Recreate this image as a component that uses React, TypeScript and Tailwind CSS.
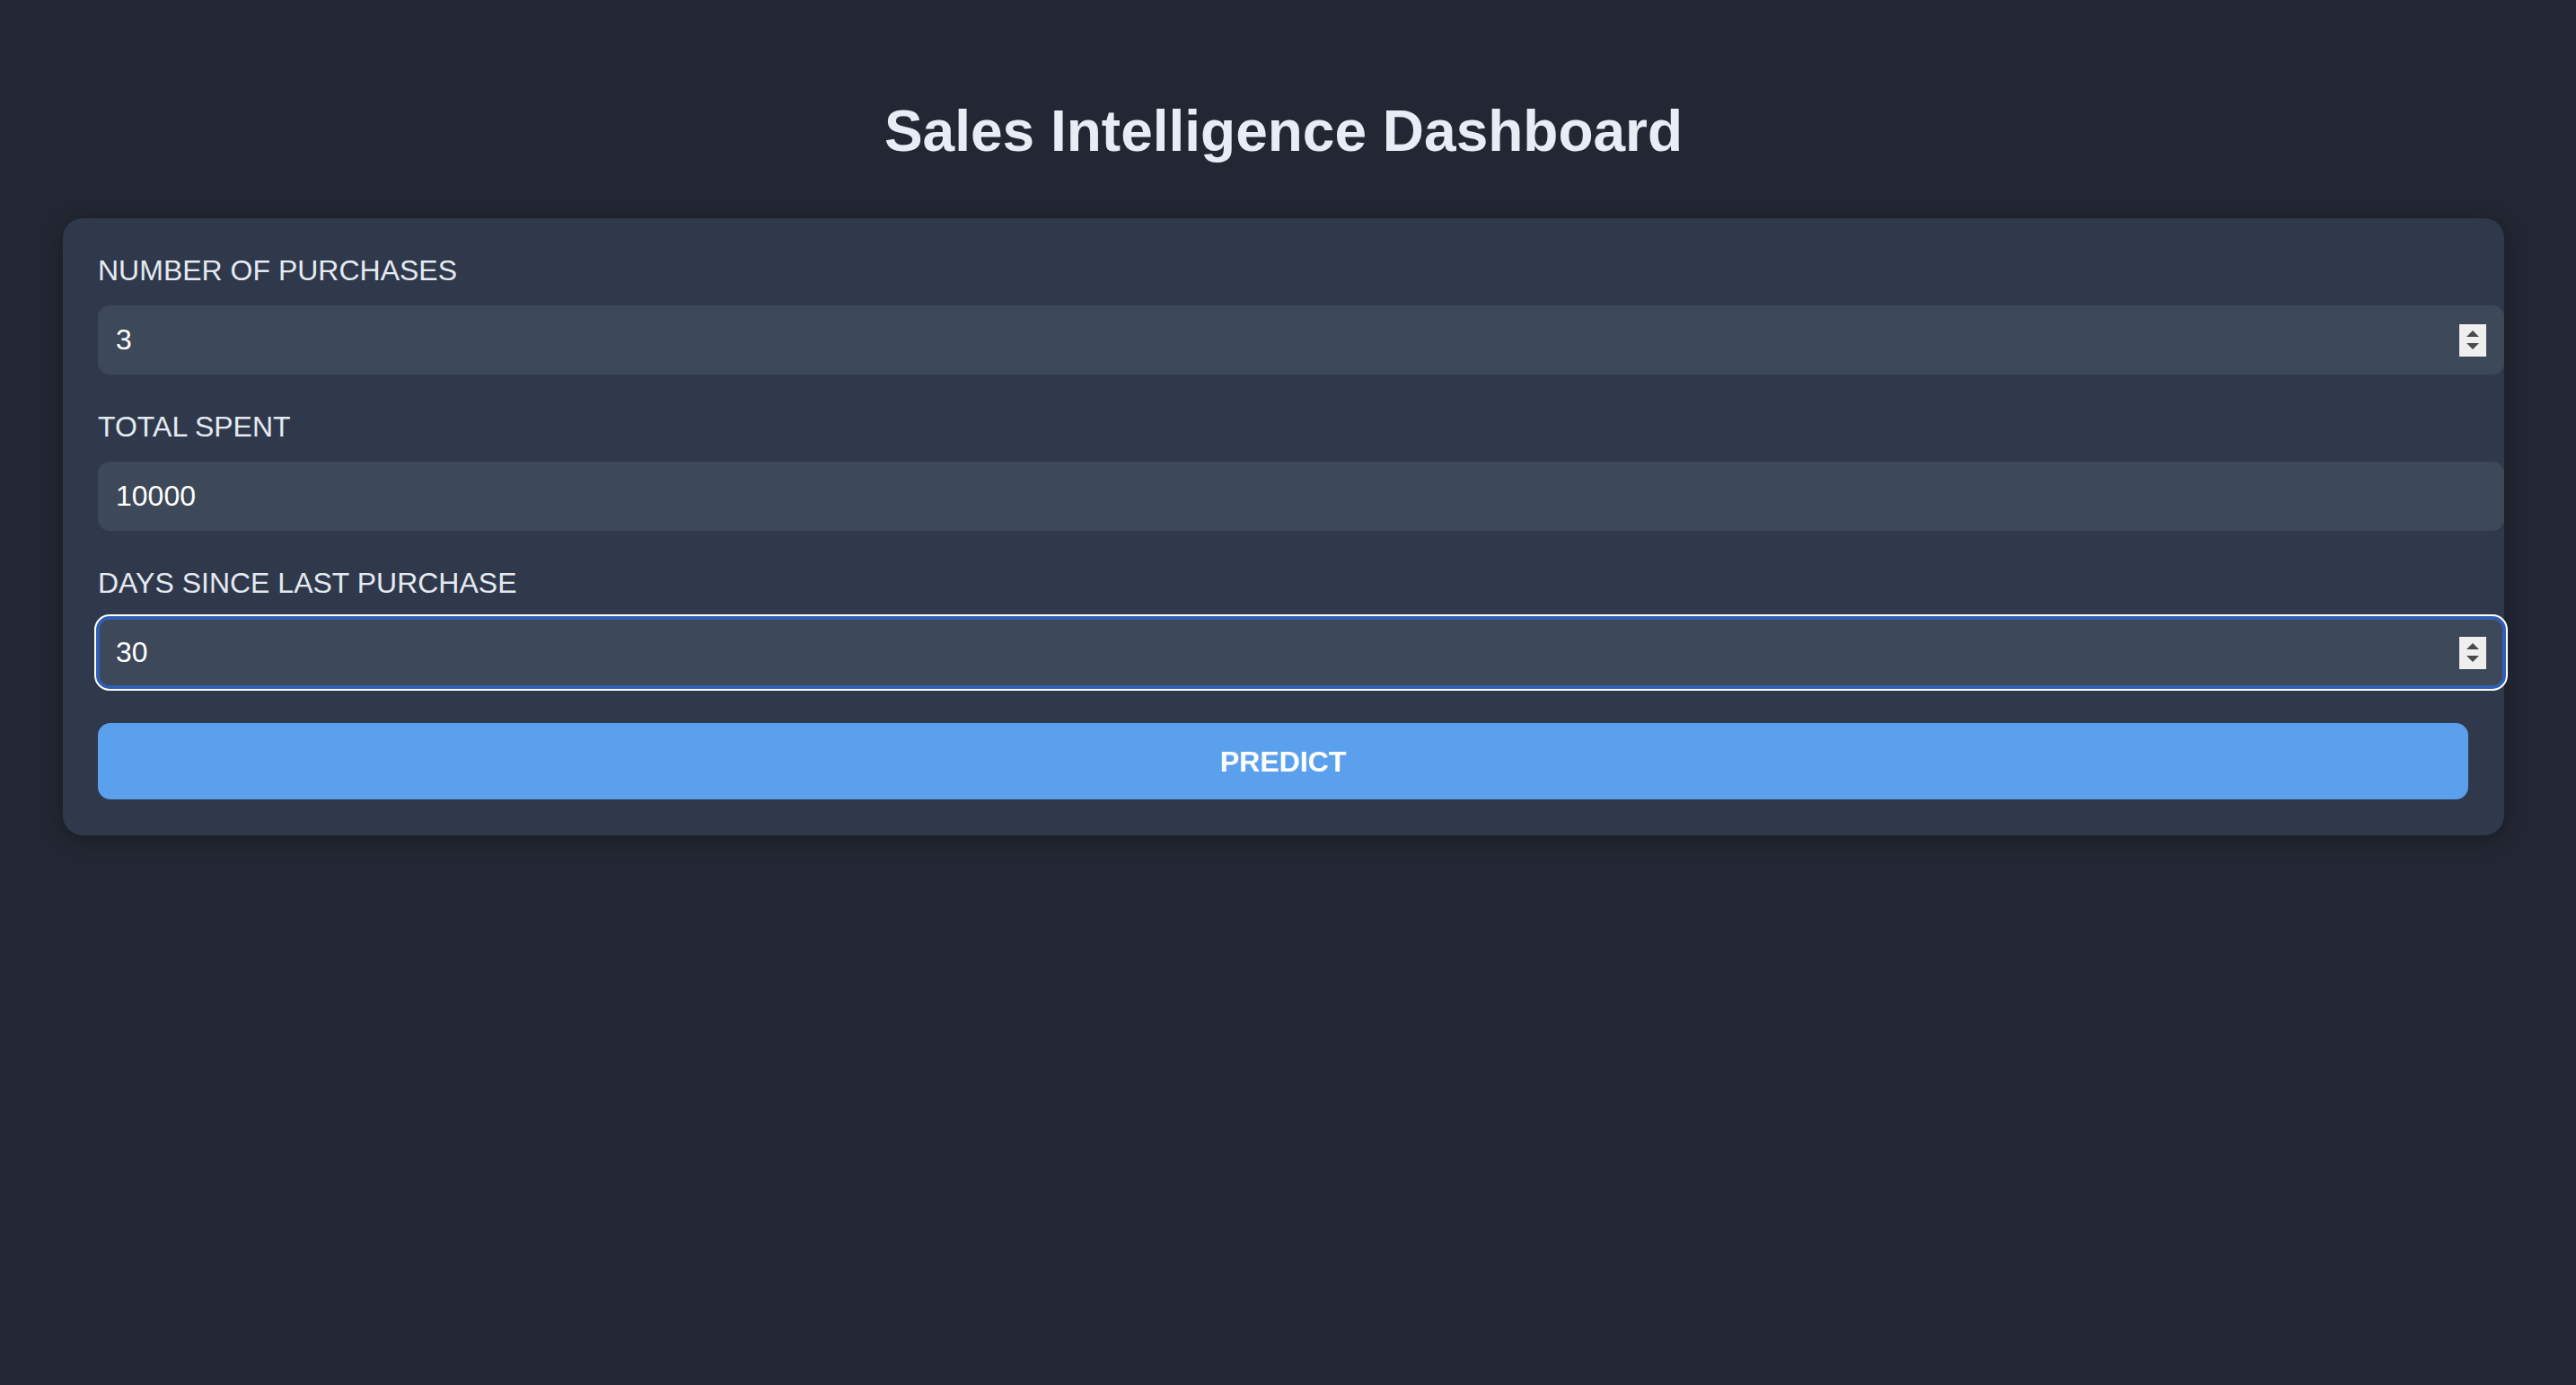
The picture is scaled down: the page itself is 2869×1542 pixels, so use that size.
import React from "react";

function Spinner() {
  return (
    <div className="pointer-events-none absolute right-[20px] top-1/2 flex h-[36px] w-[30px] -translate-y-1/2 flex-col items-center justify-center gap-[7px] bg-[#efefef]">
      <svg width="14" height="7" viewBox="0 0 14 7">
        <polygon points="7,0 14,7 0,7" fill="#4a4a4a" />
      </svg>
      <svg width="14" height="7" viewBox="0 0 14 7">
        <polygon points="0,0 14,0 7,7" fill="#4a4a4a" />
      </svg>
    </div>
  );
}

function Field({
  label,
  value,
  spinner,
  focused,
  last,
}: {
  label: string;
  value: string;
  spinner?: boolean;
  focused?: boolean;
  last?: boolean;
}) {
  return (
    <div className={last ? "mb-[40px]" : "mb-[40px]"}>
      <div className="mb-[20px] text-[32px] leading-[37px] text-[#e4e9f1]">{label}</div>
      <div className="relative w-[calc(100%+40px)]">
        <input
          readOnly
          type="text"
          value={value}
          className={
            "block h-[77px] w-full rounded-[13px] bg-[#3d4859] px-[20px] text-[32px] text-white outline-none " +
            (focused
              ? "shadow-[inset_0_0_0_2px_#3060b8,0_0_0_2px_#3060b8,0_0_0_4px_#ffffff]"
              : "")
          }
          style={{ fontFamily: '"Liberation Sans", Arial, sans-serif' }}
        />
        {spinner && <Spinner />}
      </div>
    </div>
  );
}

export default function App() {
  return (
    <div
      className="min-h-[1542px] w-full bg-[#222733] pt-[109px]"
      style={{ fontFamily: '"Liberation Sans", Arial, Helvetica, sans-serif' }}
    >
      <div className="ml-[70px] w-[2719px]">
        <h1 className="mb-[60px] text-center text-[64px] font-bold leading-[74px] text-[#e8ecf4]">
          Sales Intelligence Dashboard
        </h1>
        <div className="rounded-[22px] bg-[#2f394b] pb-[40px] pl-[39px] pr-[40px] pt-[40px] shadow-[0_4px_24px_rgba(0,0,0,0.3)]">
          <Field label="NUMBER OF PURCHASES" value="3" spinner />
          <Field label="TOTAL SPENT" value="10000" />
          <Field label="DAYS SINCE LAST PURCHASE" value="30" spinner focused last />
          <button className="flex h-[85px] w-full items-center justify-center rounded-[14px] bg-[#5ba0ed] text-[32px] font-bold text-white">
            PREDICT
          </button>
        </div>
      </div>
    </div>
  );
}
